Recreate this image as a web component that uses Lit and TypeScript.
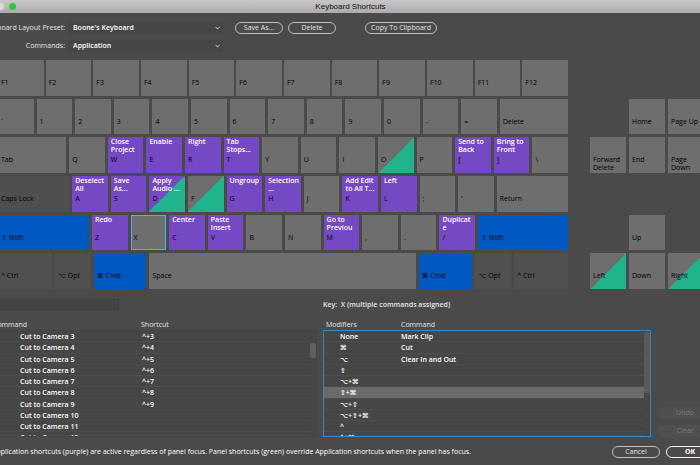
import { LitElement, html, css, svg, nothing } from "lit";
import { customElement, state } from "lit/decorators.js";
import { classMap } from "lit/directives/class-map.js";
import { styleMap } from "lit/directives/style-map.js";

interface Key {
  label: string;
  width?: number;
  lines?: string[];
  tone?: "purple" | "blue" | "dark" | "faint";
  panel?: boolean;
  area?: string;
  glyph?: string;
}

const app = (label: string, ...lines: string[]): Key => ({ label, lines, tone: "purple" });
const plain = (text: string): Key[] => text.split(" ").map((label) => ({ label }));

const ROWS: Key[][] = [
  plain("F1 F2 F3 F4 F5 F6 F7 F8 F9 F10 F11 F12"),
  [{ label: "`", width: 36 }, ...plain("1 2 3 4 5 6 7 8 9 0 - ="), { label: "Delete", width: 69 }],
  [
    { label: "Tab", width: 69 },
    { label: "Q" },
    app("W", "Close", "Project"),
    app("E", "Enable"),
    app("R", "Right"),
    app("T", "Tab", "Stops..."),
    ...plain("Y U I"),
    { label: "O", panel: true },
    { label: "P" },
    app("[", "Send to", "Back"),
    app("]", "Bring to", "Front"),
    { label: "\\" },
  ],
  [
    { label: "Caps Lock", width: 72, tone: "dark" },
    app("A", "Deselect", "All"),
    app("S", "Save", "As..."),
    { ...app("D", "Apply", "Audio ..."), panel: true },
    { label: "F", panel: true },
    app("G", "Ungroup"),
    app("H", "Selection", "..."),
    { label: "J" },
    app("K", "Add Edit", "to All T..."),
    app("L", "Left"),
    ...plain("; '"),
    { label: "Return", width: 72 },
  ],
  [
    { label: "Shift", glyph: "⇧", width: 92, tone: "blue" },
    app("Z", "Redo"),
    { label: "X" },
    app("C", "Center"),
    app("V", "Paste", "Insert"),
    ...plain("B N"),
    app("M", "Go to", "Previou"),
    ...plain(", ."),
    app("/", "Duplicat", "e"),
    { label: "Shift", glyph: "⇧", width: 91, tone: "blue" },
  ],
  [
    { label: "Ctrl", glyph: "^", width: 54, tone: "faint" },
    { label: "Opt", glyph: "⌥", width: 36, tone: "faint" },
    { label: "Cmd", glyph: "⌘", width: 53, tone: "blue" },
    { label: "Space", width: 267 },
    { label: "Cmd", glyph: "⌘", width: 54, tone: "blue" },
    { label: "Opt", glyph: "⌥", width: 36, tone: "faint" },
    { label: "Ctrl", glyph: "^", width: 54, tone: "faint" },
  ],
];

const NAV: Key[] = [
  { label: "Home", area: "2 / 2" },
  { label: "Page Up", area: "2 / 3" },
  { label: "Forward Delete", area: "3 / 1" },
  { label: "End", area: "3 / 2" },
  { label: "Page Down", area: "3 / 3" },
  { label: "Up", area: "5 / 2" },
  { label: "Left", area: "6 / 1", panel: true },
  { label: "Down", area: "6 / 2" },
  { label: "Right", area: "6 / 3", panel: true },
];

const COMMANDS = [3, 4, 5, 6, 7, 8, 9, 10, 11, 12].map((n) => [
  `Cut to Camera ${n}`,
  n < 10 ? `^+${n}` : "",
]);

const MODIFIERS = [
  ["None", "Mark Clip"],
  ["⌘", "Cut"],
  ["⌥", "Clear In and Out"],
  ["⇧", ""],
  ["⌥+⌘", ""],
  ["⇧+⌘", ""],
  ["⌥+⇧", ""],
  ["⌥+⇧+⌘", ""],
  ["^", ""],
  ["^+⌘", ""],
];

@customElement("app-root")
export class AppRoot extends LitElement {
  @state() private activeKey = "X";
  @state() private activeModifier = 5;

  static styles = css`
    :host {
      display: block;
      min-height: 100vh;
      overflow: hidden;
      background: #4a4a4a;
      color: #e6e6e6;
      font: 7px/8px "Open Sans", "DejaVu Sans", sans-serif;
    }
    * {
      box-sizing: border-box;
    }
    button,
    select,
    input {
      margin: 0;
      font: inherit;
      color: inherit;
    }
    .dialog {
      margin: 0 -24px;
    }
    .titlebar {
      display: grid;
      grid-template-columns: 1fr auto 1fr;
      align-items: center;
      height: 13px;
      padding: 0 20px 0 21px;
      background: linear-gradient(#c9c6c9, #aeabae);
      color: #111;
    }
    .title {
      margin: 0;
      font: 8px/13px "Liberation Sans", sans-serif;
    }
    .lights {
      display: flex;
      gap: 5px;
    }
    .light {
      width: 7px;
      height: 7px;
      border-radius: 50%;
      background: #dcdcdc;
    }
    .light.zoom {
      background: #28c940;
    }
    .toolbar {
      display: flex;
      gap: 12px;
      padding: 9px 0 8px;
    }
    .fields {
      display: grid;
      grid-template-columns: 89px 155px;
      grid-auto-rows: 12px;
      gap: 6px 3px;
      line-height: 12px;
    }
    .fields label {
      text-align: right;
      white-space: nowrap;
    }
    .picker {
      position: relative;
    }
    .picker select {
      display: block;
      width: 100%;
      height: 12px;
      padding: 0 5px;
      border: 0;
      border-radius: 1px;
      appearance: none;
      background: #464646;
      color: #fff;
      font-weight: 600;
    }
    .picker svg {
      position: absolute;
      top: 4px;
      right: 3px;
      width: 5px;
      height: 4px;
      pointer-events: none;
    }
    .actions {
      display: flex;
      align-items: flex-start;
    }
    .pill {
      min-width: 48px;
      height: 12px;
      padding: 0 5px;
      border: 1px solid #bdbdbd;
      border-radius: 6px;
      background: none;
      line-height: 10px;
      white-space: nowrap;
    }
    .pill + .pill {
      margin-left: 5px;
    }
    .actions .wide {
      min-width: 72px;
      margin-left: 29px;
    }
    .boards {
      display: flex;
      gap: 22px;
      height: 229px;
      padding: 0 20px 0 22px;
    }
    .keyboard,
    .nav {
      display: grid;
      grid-template-rows: repeat(6, minmax(0, 1fr));
      gap: 3px;
    }
    .keyboard {
      flex: 1;
    }
    .nav {
      grid-template-columns: repeat(3, 36px);
    }
    .row {
      display: grid;
      gap: 3px;
    }
    .row:first-child {
      gap: 2px;
    }
    .key {
      display: flex;
      flex-direction: column;
      justify-content: flex-start;
      align-items: flex-start;
      gap: 2px;
      min-width: 0;
      padding: 1px 0 0 3px;
      border: 0;
      background-color: #6e6e6e;
      color: #000;
      text-align: left;
      overflow: hidden;
    }
    .key.purple {
      background-color: #7548c4;
    }
    .key.blue {
      background-color: #0059c1;
    }
    .key.dark {
      background-color: #4f4f4f;
    }
    .key.faint {
      background-color: #505050;
    }
    .key.panel {
      background-image: linear-gradient(to bottom right, transparent 50%, #21b48c 50%);
    }
    .key.active {
      padding: 0 0 0 2px;
      border: 1px solid #48b4f0;
    }
    .assigned {
      flex: none;
      height: 16px;
      color: #fff;
      font-weight: 600;
      white-space: nowrap;
    }
    .assigned span {
      display: block;
    }
    .cap {
      font-weight: 500;
    }
    .lists {
      display: grid;
      grid-template-columns: 341fr 328fr 56px;
      grid-template-rows: 11px 127px;
      gap: 0 6px;
      padding: 10px 11px 0 0;
    }
    .search {
      width: 143px;
      height: 11px;
      padding: 0 4px;
      border: 1px solid #3e3e3e;
      background: #444;
    }
    .keyinfo {
      margin: 0;
      line-height: 11px;
      font-weight: 600;
      white-space: pre;
    }
    .list {
      position: relative;
      grid-row: 2;
    }
    .list table {
      display: flex;
      flex-direction: column;
      height: 100%;
    }
    .list thead {
      display: block;
      padding-top: 9px;
    }
    .list tbody {
      flex: 1;
      display: grid;
      grid-template-rows: repeat(9, minmax(0, 3fr)) minmax(0, 1fr);
      min-height: 0;
      border: 1px solid #444;
      background: #464646;
      overflow: hidden;
    }
    .list tr {
      display: grid;
      grid-template-columns: 165px 1fr;
    }
    .list tbody tr {
      margin-right: 6px;
      border-bottom: 1px solid #4d4d4d;
      color: #fff;
      font-weight: 600;
    }
    .list th,
    .list td {
      padding: 0;
      font-weight: inherit;
      text-align: left;
      white-space: pre;
    }
    .list thead th {
      line-height: 11px;
    }
    .list tbody td {
      line-height: 11px;
    }
    .commands thead th:first-child {
      padding-left: 17px;
    }
    .commands tbody td:first-child {
      padding-left: 43px;
    }
    .modifiers tr {
      grid-template-columns: 75px 1fr;
    }
    .modifiers thead {
      padding-left: 3px;
    }
    .modifiers tbody {
      border-color: #4482b4;
    }
    .modifiers tbody td {
      padding-left: 2px;
    }
    .modifiers tbody td:first-child {
      padding-left: 16px;
    }
    .modifiers tbody tr.selected {
      background: #6a6a6a;
    }
    .thumb {
      position: absolute;
      right: 1px;
      top: 33px;
      width: 6px;
      height: 15px;
      border-radius: 2px;
      background: #606060;
    }
    .modifiers .thumb {
      top: 22px;
      height: 61px;
      background: #5a5a5a;
    }
    .side {
      grid-column: 3;
      grid-row: 2;
      display: flex;
      flex-direction: column;
      justify-content: flex-end;
      gap: 6px;
    }
    .pill:disabled {
      margin: 0;
      border-color: #4f4f4f;
      background: #4f4f4f;
      color: #7c7c7c;
    }
    .footer {
      display: flex;
      align-items: center;
      gap: 6px;
      padding: 9px 10px 7px 16px;
    }
    .hint {
      flex: 1;
      margin: 0;
      color: #fff;
      font-weight: 400;
      line-height: 12px;
      white-space: nowrap;
    }
    .footer .pill {
      margin: 0;
    }
    .pill.default {
      border-color: #f4f4f4;
      color: #fff;
      font-weight: 700;
    }
  `;

  private picker(id: string, label: string, value: string) {
    return html`
      <label for=${id}>${label}</label>
      <div class="picker">
        <select id=${id}>
          <option>${value}</option>
        </select>
        <svg viewBox="0 0 5 4" aria-hidden="true">
          ${svg`<path d="M0.4 0.8 L2.5 3 L4.6 0.8" fill="none" stroke="#e0e0e0" stroke-width="0.9" />`}
        </svg>
      </div>
    `;
  }

  private row(keys: Key[]) {
    const gridTemplateColumns = keys.map((key) => `minmax(0, ${key.width ?? 36}fr)`).join(" ");
    return html`
      <div class="row" style=${styleMap({ gridTemplateColumns })}>
        ${keys.map((key) => this.key(key))}
      </div>
    `;
  }

  private key(key: Key) {
    const active = key.label === this.activeKey;
    return html`
      <button
        class=${classMap({ key: true, [key.tone ?? "gray"]: true, panel: !!key.panel, active })}
        style=${key.area ? styleMap({ gridArea: key.area }) : nothing}
        @click=${() => (this.activeKey = key.label)}
      >
        <span class="assigned">${(key.lines ?? []).map((line) => html`<span>${line}</span>`)}</span>
        <span class="cap">${key.glyph ? `${key.glyph} ` : nothing}${key.label}</span>
      </button>
    `;
  }

  render() {
    return html`
      <div class="dialog">
        <header class="titlebar">
          <div class="lights"><span class="light"></span><span class="light zoom"></span></div>
          <h1 class="title">Keyboard Shortcuts</h1>
        </header>
        <div class="toolbar">
          <div class="fields">
            ${this.picker("preset", "Keyboard Layout Preset:", "Boone's Keyboard")}
            ${this.picker("commands", "Commands:", "Application")}
          </div>
          <div class="actions">
            <button class="pill">Save As...</button>
            <button class="pill">Delete</button>
            <button class="pill wide">Copy To Clipboard</button>
          </div>
        </div>
        <div class="boards">
          <div class="keyboard">${ROWS.map((keys) => this.row(keys))}</div>
          <div class="nav">${NAV.map((key) => this.key(key))}</div>
        </div>
        <section class="lists">
          <input class="search" type="search" aria-label="Search commands" />
          <p class="keyinfo">Key:  X (multiple commands assigned)</p>
          <div class="list commands">
            <table>
              <thead>
                <tr><th>Command</th><th>Shortcut</th></tr>
              </thead>
              <tbody>
                ${COMMANDS.map(([name, keys]) => html`<tr><td>${name}</td><td>${keys}</td></tr>`)}
              </tbody>
            </table>
            <div class="thumb"></div>
          </div>
          <div class="list modifiers">
            <table>
              <thead>
                <tr><th>Modifiers</th><th>Command</th></tr>
              </thead>
              <tbody>
                ${MODIFIERS.map(
                  ([keys, name], i) => html`
                    <tr
                      class=${classMap({ selected: i === this.activeModifier })}
                      @click=${() => (this.activeModifier = i)}
                    ><td>${keys}</td><td>${name}</td></tr>
                  `
                )}
              </tbody>
            </table>
            <div class="thumb"></div>
          </div>
          <div class="side">
            <button class="pill" disabled>Undo</button>
            <button class="pill" disabled>Clear</button>
          </div>
        </section>
        <footer class="footer">
          <p class="hint">
            Application shortcuts (purple) are active regardless of panel focus. Panel shortcuts
            (green) override Application shortcuts when the panel has focus.
          </p>
          <button class="pill">Cancel</button>
          <button class="pill default">OK</button>
        </footer>
      </div>
    `;
  }
}
